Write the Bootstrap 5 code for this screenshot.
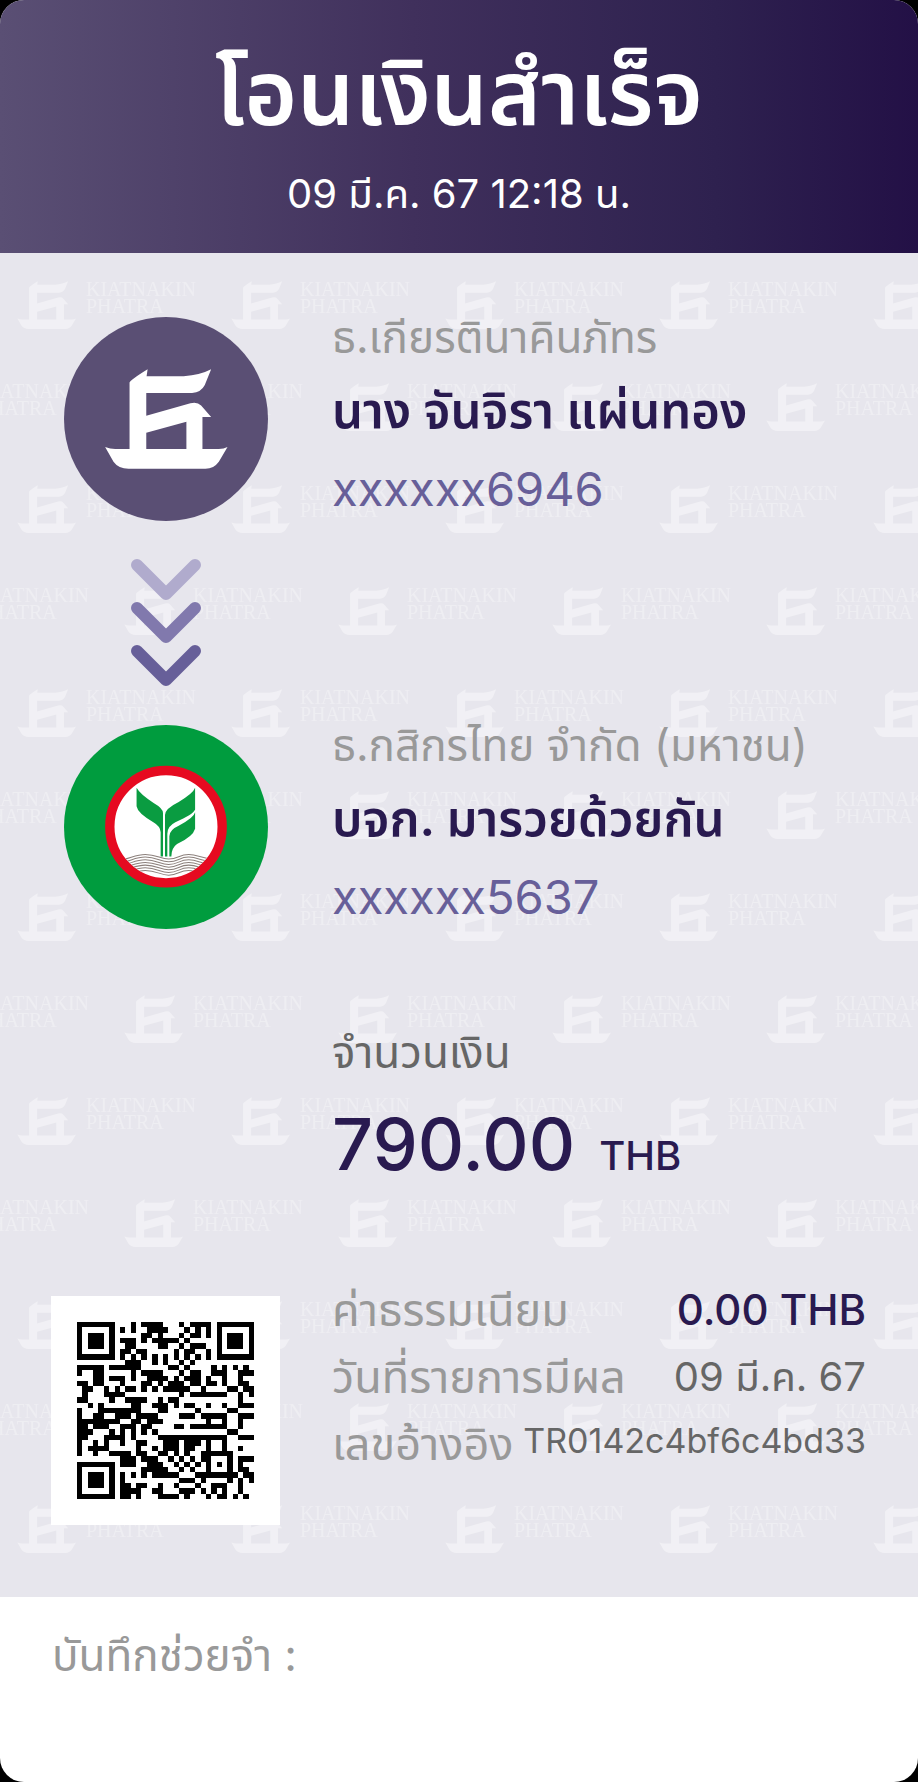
<!DOCTYPE html>
<html lang="th">
<head>
<meta charset="utf-8">
<meta name="viewport" content="width=device-width, initial-scale=1">
<title>โอนเงินสำเร็จ</title>
<link href="https://cdn.jsdelivr.net/npm/bootstrap@5.3.0/dist/css/bootstrap.min.css" rel="stylesheet">
<style>
body{background:#000;font-family:Inter,"Noto Sans Thai","Noto Sans",sans-serif;}
.slip{border-radius:24px;background:#fff;min-height:100vh}
.slip-head{background:linear-gradient(90deg,#5a4f74,#40305c 45%,#2e214f 78%,#231046);color:#fff;padding:35px 24px 16px}
.slip-head h1{font-size:90px;line-height:116px;font-weight:600}
.slip-time{font-size:40px;line-height:86px}
.slip-body{background:#e7e6ed;padding:48px 52px 72px 51px}
.watermark{z-index:0}
.slip-row{gap:52px;z-index:1}
.side{width:229px}
.disc{width:204px;height:204px}
.party{height:240px}
.party .disc{margin-top:16px}
.step{height:168px;padding-top:18px}
.t-bank,.t-label{font-size:44px;line-height:72px;color:#999}
.t-name{font-size:49px;line-height:76px;font-weight:600;color:#291a50}
.t-acct{font-size:47px;line-height:80px;color:#675f99}
.t-dark{color:#666}
.t-navy{color:#291a50;font-weight:500}
.amount{padding-top:67px;height:327px}
.amount-num{font-size:72px;line-height:112px}
.t-cur{font-size:40px}
.fees dt{font-size:45px;line-height:67px;font-weight:400}
.fees dd{font-size:40px;line-height:67px;font-weight:400}
.fees dd.ref-no{font-size:34px;line-height:62px}
.fees dd.t-navy{font-size:42px;font-weight:500}
.qr{width:229px;height:229px;margin-top:20px}
.memo{padding:22px 52px}
</style>
</head>
<body>
<main class="slip overflow-hidden d-flex flex-column">
<header class="slip-head text-center">
<h1 class="mb-0">โอนเงินสำเร็จ</h1>
<p class="slip-time mb-0">09 มี.ค. 67 12:18 น.</p>
</header>
<section class="slip-body position-relative">
<svg class="watermark position-absolute top-0 start-0 w-100 h-100" aria-hidden="true">
<defs>
<path id="ship" fill-rule="evenodd" d="M165 441Q180 447 195 447H238V248Q240 240 292 208L289 229H400Q450 225 482 208L463 255Q452 277 425 279H288V347L420 310Q440 304 452 317L482 351H456V447H505Q520 447 531 441L505 485Q490 506 465 506H235Q205 506 190 485ZM288 398L408 365V447H288Z"/>
<g id="stamp"><use href="#ship" transform="translate(-9 -5) scale(.16)"/><g font-family="Liberation Serif" font-size="20" fill-opacity=".3"><text x="86" y="43">KIATNAKIN</text><text x="86" y="60">PHATRA</text></g></g>
<pattern id="stamps" width="214" height="204" patternUnits="userSpaceOnUse"><g fill="#fff" fill-opacity=".42"><use href="#stamp"/><use href="#stamp" x="107" y="102"/><use href="#stamp" x="-107" y="102"/></g></pattern>
</defs>
<rect width="100%" height="1316" fill="url(#stamps)"/>
</svg>
<div class="slip-row party d-flex position-relative">
<div class="side flex-shrink-0 d-flex justify-content-center">
<svg class="disc" viewBox="42 52 610 610" role="img" aria-label="Kiatnakin Phatra"><circle cx="347" cy="357" r="305" fill="#5a4f74"/><use href="#ship" fill="#fff"/></svg>
</div>
<div><div class="t-bank">ธ.เกียรตินาคินภัทร</div><div class="t-name">นาง จันจิรา แผ่นทอง</div><div class="t-acct">xxxxxx6946</div></div>
</div>
<div class="slip-row step d-flex position-relative">
<div class="side d-flex justify-content-center">
<svg width="70" height="128" viewBox="0 0 70 128" fill="none" stroke-width="12" stroke-linecap="round" stroke-linejoin="round" aria-hidden="true"><path d="M6 6L35 35L64 6" stroke="#b0abcd"/><path d="M6 49L35 78L64 49" stroke="#8179ad"/><path d="M6 92L35 121L64 92" stroke="#675f99"/></svg>
</div>
</div>
<div class="slip-row party d-flex position-relative">
<div class="side flex-shrink-0 d-flex justify-content-center">
<svg class="disc" viewBox="42 47 610 610" role="img" aria-label="Kasikornbank"><defs><clipPath id="pond"><circle cx="347" cy="351" r="154"/></clipPath></defs>
<circle cx="347" cy="352" r="305" fill="#009c3e"/><circle cx="347" cy="351" r="168" fill="#fff" stroke="#e60a20" stroke-width="28"/>
<g fill="#0a9c41"><path d="M259 235Q270 255 310 280Q338 296 338 310V440H331V368Q331 350 308 337Q262 310 259 290Z"/><path d="M434 235Q428 252 385 277Q344 297 344 316V440H351V372Q351 350 375 338Q428 315 434 300Z"/><path d="M434 308Q430 325 385 348Q357 360 357 380V440H363Q363 415 380 403Q428 380 434 357Z"/></g>
<g clip-path="url(#pond)" fill="none" stroke="#8c807c" stroke-width="3"><path id="wave" d="M195 452C235 452 250 434 285 434C320 434 330 448 355 448C385 448 385 434 415 434C445 434 455 450 505 450"/><use href="#wave" y="8"/><use href="#wave" y="16"/><use href="#wave" y="24"/><use href="#wave" y="32"/><use href="#wave" y="40"/><use href="#wave" y="48"/></g></svg>
</div>
<div><div class="t-bank">ธ.กสิกรไทย จำกัด (มหาชน)</div><div class="t-name">บจก. มารวยด้วยกัน</div><div class="t-acct">xxxxxx5637</div></div>
</div>
<div class="slip-row amount d-flex position-relative">
<div class="side flex-shrink-0"></div>
<div><div class="t-label t-dark">จำนวนเงิน</div><div class="t-navy d-flex align-items-baseline gap-4"><span class="amount-num">790.00</span><span class="t-cur">THB</span></div></div>
</div>
<div class="slip-row d-flex position-relative">
<div class="side flex-shrink-0"><svg class="qr d-block" viewBox="0 0 229 229" role="img" aria-label="QR code"><rect width="229" height="229" fill="#fff"/><g transform="translate(26 26) scale(5.37)"><path id="modules" shape-rendering="crispEdges"/></g></svg></div>
<dl class="fees flex-grow-1 mb-0">
<div class="d-flex justify-content-between"><dt class="t-label">ค่าธรรมเนียม</dt><dd class="t-navy mb-0">0.00 THB</dd></div>
<div class="d-flex justify-content-between"><dt class="t-label">วันที่รายการมีผล</dt><dd class="t-dark mb-0">09 มี.ค. 67</dd></div>
<div class="d-flex justify-content-between"><dt class="t-label">เลขอ้างอิง</dt><dd class="t-dark mb-0 ref-no">TR0142c4bf6c4bd33</dd></div>
</dl>
</div>
</section>
<footer class="memo flex-grow-1"><div class="t-label">บันทึกช่วยจำ :</div></footer>
</main>
<script>
// Each row lists its dark runs as "start" or "start-end"
const rows = [
"0-6 10 12-15 19 21-24 26-32","0 6 8 10 13-16 20 22 24 26 32","0 2-4 6 12-13 15 19 21-22 24 26 28-30 32","0 2-4 6 8-10 12 14-18 20 26 28-30 32",
"0 2-4 6 9-10 15-16 19 21-23 26 28-30 32","0 6 8-9 11-12 18 20-21 24 26 32","0-6 8 10 12 14 16 18 20 22 24 26-32","9-11 14 16 19 21",
"0-4 6-11 17-18 20 25 27 29 31","0 3-4 10 12-15 19 21-22 25-27 30-32","3-4 6-8 10 13-16 18 20-22 24 27 30","0-1 3-4 8 12-13 15 17-19 21-22 24-25 27 30-31",
"1-2 5 7 9-10 12 14 16-20 23 28-29 31-32","1 5-8 19 21-27 30 32","0-1 6 9-12 15 17-18 30","2 4 10-11 14-16 18 20-21 24 27 30-32",
"0 4-11 15-16 22 28-29","0 3-4 7-9 11-14 19-21 23-27 30-32","0-7 10-11 13-15 24 27 30","0-1 3-5 8-10 12-13 18-19 21-27 30",
"0-2 6 8 10 12 14 28-29","0-1 5-8 10 15-27 30-32","0 3 5 8 11-12 16-18 20-22 24 27","0 2-5 11 14 16-18 20-21 24 27 30",
"0 3 6-9 11-12 15-16 18 20 23-28","8-10 12-14 17 19 21 23-24 28 30-32","0-6 8-10 13-15 18 20 22 24 26 28 30","0 6 12-16 19 21 24 28 30-31",
"0 2-4 6 8 10 12 14-18 22-29 31-32","0 2-4 6 8 19-21 23 28 30 32","0 2-4 6 8-9 11-12 15 18 22 25-27 30","0 6 8-11 14-15 19-21 23 25 27 30","0-6 8-9 11 15-18 20 24 26-27 29 31"];
document.getElementById("modules").setAttribute("d", rows.map((r, y) => r.split(" ").map(s => {
  const [a, b = a] = s.split("-").map(Number);
  return `M${a} ${y}h${b - a + 1}v1h${a - b - 1}z`;
}).join("")).join(""));
</script>
<script src="https://cdn.jsdelivr.net/npm/bootstrap@5.3.0/dist/js/bootstrap.bundle.min.js"></script>
</body>
</html>
